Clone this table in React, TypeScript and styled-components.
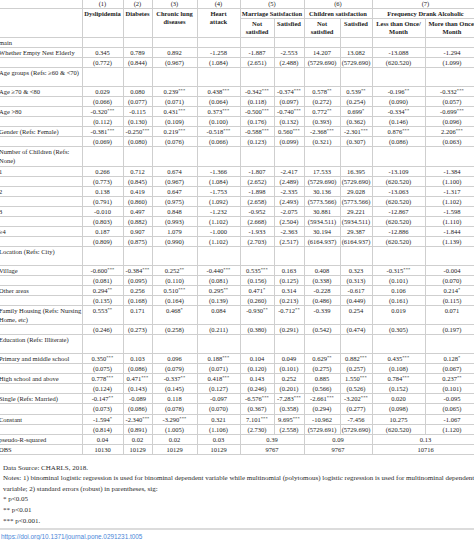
import React from "react"
import styled, {createGlobalStyle} from "styled-components"

const GlobalStyle = createGlobalStyle`
  html, body {
    margin: 0;
    padding: 0;
    background: #ffffff;
  }
  body {
    font-family: "Liberation Serif", "DejaVu Serif", serif;
    color: #222222;
  }
`

const Page = styled.div`
  width: 474px;
  height: 540px;
  overflow: hidden;
  background: #ffffff;
`

const Table = styled.table`
  border-collapse: collapse;
  table-layout: fixed;
  width: 480px;
  margin-left: -1px;
  margin-top: -3px;
  font-size: 6.5px;
  color: #222222;
`

const HeadCell = styled.th<{$top?: boolean; $h?: number}>`
  border: 1px solid #cfcfcf;
  border-top: none;
  padding: 0 1px;
  font-weight: ${(p) => (p.$top ? "normal" : "bold")};
  line-height: 8px;
  height: ${(p) => (p.$h ? `${p.$h}px` : "auto")};
  vertical-align: ${(p) => (p.$top ? "bottom" : "top")};
  padding-top: ${(p) => (p.$top ? "0" : "1px")};
  text-align: center;
  white-space: nowrap;
  overflow: hidden;
`

const BlankHead = styled.th`
  border-bottom: 1px solid #cfcfcf;
  border-right: 1px solid #cfcfcf;
  padding: 0;
`

const Row = styled.tr<{$tall?: boolean}>`
  height: ${(p) => (p.$tall ? "19px" : "9.05px")};
`

const LabelCell = styled.td`
  border: 1px solid #cfcfcf;
  border-left: none;
  padding: 0;
  line-height: 9.05px;
  vertical-align: top;
  text-align: left;
  white-space: nowrap;
  overflow: hidden;
`

const ValueCell = styled.td`
  border: 1px solid #cfcfcf;
  padding: 0;
  line-height: 9.05px;
  vertical-align: top;
  text-align: center;
  white-space: nowrap;
  overflow: hidden;
`

const Star = styled.span`
  font-size: 4.6px;
  line-height: 0;
  vertical-align: 1.6px;
  letter-spacing: 0.1px;
`

const Notes = styled.div`
  margin-top: 8px;
  padding-left: 3px;
  font-size: 7px;
  line-height: 10.6px;
  color: #2a2a2a;
  white-space: nowrap;
`

const Rule = styled.div`
  margin-top: 2px;
  height: 2px;
  background: #dcdcdc;
`

const DoiLink = styled.a`
  display: block;
  margin-top: 3px;
  padding-left: 1px;
  font-family: "Liberation Sans", Arial, sans-serif;
  font-size: 6.4px;
  color: #4a86d8;
  text-decoration: none;
`

type Line =
  | {kind: "coef"; label: string; v: string[]; tall?: boolean; br?: string}
  | {kind: "se"; v: string[]}
  | {kind: "cat"; label: string; br?: string}
  | {kind: "stat"; label: string; left: string[]; right: string[]}

const lines: Line[] = [
  {kind: "cat", label: "main"},
  {kind: "coef", label: "Whether Empty Nest Elderly", v: ["0.345", "0.789", "0.892", "-1.258", "-1.887", "-2.553", "14.207", "13.082", "-13.088", "-1.294"]},
  {kind: "se", v: ["(0.772)", "(0.844)", "(0.967)", "(1.084)", "(2.651)", "(2.488)", "(5729.690)", "(5729.690)", "(620.520)", "(1.099)"]},
  {kind: "cat", label: "Age groups (Refs: \u226560 & <70)"},
  {kind: "coef", label: "Age \u226570 & <80", v: ["0.029", "0.080", "0.239***", "0.438***", "-0.342***", "-0.374***", "0.578**", "0.539**", "-0.196**", "-0.332***"]},
  {kind: "se", v: ["(0.066)", "(0.077)", "(0.071)", "(0.064)", "(0.118)", "(0.097)", "(0.272)", "(0.254)", "(0.090)", "(0.057)"]},
  {kind: "coef", label: "Age >80", v: ["-0.320***", "-0.115", "0.431***", "0.373***", "-0.500***", "-0.740***", "0.772**", "0.699*", "-0.334**", "-0.699***"]},
  {kind: "se", v: ["(0.112)", "(0.130)", "(0.109)", "(0.100)", "(0.176)", "(0.132)", "(0.393)", "(0.362)", "(0.146)", "(0.096)"]},
  {kind: "coef", label: "Gender (Refs: Female)", v: ["-0.381***", "-0.250***", "0.219***", "-0.518***", "-0.588***", "0.560***", "-2.368***", "-2.301***", "0.876***", "2.206***"]},
  {kind: "se", v: ["(0.069)", "(0.080)", "(0.076)", "(0.066)", "(0.123)", "(0.099)", "(0.321)", "(0.307)", "(0.086)", "(0.063)"]},
  {kind: "cat", label: "Number of Children (Refs:", br: "None)"},
  {kind: "coef", label: "1", v: ["0.266", "0.712", "0.674", "-1.366", "-1.807", "-2.417", "17.533", "16.395", "-13.109", "-1.384"]},
  {kind: "se", v: ["(0.773)", "(0.845)", "(0.967)", "(1.084)", "(2.652)", "(2.489)", "(5729.690)", "(5729.690)", "(620.520)", "(1.100)"]},
  {kind: "coef", label: "2", v: ["0.138", "0.419", "0.647", "-1.753", "-1.898", "-2.335", "30.136", "29.028", "-13.063", "-1.317"]},
  {kind: "se", v: ["(0.791)", "(0.860)", "(0.975)", "(1.092)", "(2.658)", "(2.493)", "(5773.566)", "(5773.566)", "(620.520)", "(1.102)"]},
  {kind: "coef", label: "3", v: ["-0.010", "0.497", "0.848", "-1.232", "-0.952", "-2.075", "30.881", "29.221", "-12.867", "-1.598"]},
  {kind: "se", v: ["(0.803)", "(0.882)", "(0.993)", "(1.102)", "(2.668)", "(2.504)", "(5934.511)", "(5934.511)", "(620.520)", "(1.110)"]},
  {kind: "coef", label: "\u22654", v: ["0.187", "0.907", "1.079", "-1.000", "-1.933", "-2.363", "30.194", "29.387", "-12.886", "-1.844"]},
  {kind: "se", v: ["(0.809)", "(0.875)", "(0.990)", "(1.102)", "(2.703)", "(2.517)", "(6164.937)", "(6164.937)", "(620.520)", "(1.139)"]},
  {kind: "cat", label: "Location (Refs: City)"},
  {kind: "coef", label: "Village", v: ["-0.600***", "-0.384***", "0.252**", "-0.440***", "0.535***", "0.163", "0.408", "0.323", "-0.315***", "-0.004"]},
  {kind: "se", v: ["(0.081)", "(0.095)", "(0.110)", "(0.081)", "(0.156)", "(0.125)", "(0.338)", "(0.313)", "(0.101)", "(0.070)"]},
  {kind: "coef", label: "Other areas", v: ["0.294**", "0.256", "0.510***", "0.295**", "0.471*", "0.314", "-0.228", "-0.617", "0.106", "0.214*"]},
  {kind: "se", v: ["(0.135)", "(0.168)", "(0.164)", "(0.139)", "(0.260)", "(0.213)", "(0.486)", "(0.449)", "(0.161)", "(0.115)"]},
  {kind: "coef", label: "Family Housing (Refs: Nursing", br: "Home, etc)", tall: true, v: ["0.553**", "0.171", "0.468*", "0.084", "-0.930**", "-0.712**", "-0.339", "0.254", "0.019", "0.071"]},
  {kind: "se", v: ["(0.246)", "(0.273)", "(0.258)", "(0.211)", "(0.380)", "(0.291)", "(0.542)", "(0.474)", "(0.305)", "(0.197)"]},
  {kind: "cat", label: "Education (Refs: Illiterate)"},
  {kind: "coef", label: "Primary and middle school", v: ["0.350***", "0.103", "0.096", "0.188***", "0.104", "0.049", "0.629**", "0.882***", "0.435***", "0.128*"]},
  {kind: "se", v: ["(0.075)", "(0.086)", "(0.079)", "(0.071)", "(0.120)", "(0.101)", "(0.275)", "(0.257)", "(0.108)", "(0.067)"]},
  {kind: "coef", label: "High school and above", v: ["0.778***", "0.471***", "-0.337**", "0.418***", "0.143", "0.252", "0.885", "1.550***", "0.784***", "0.237**"]},
  {kind: "se", v: ["(0.124)", "(0.143)", "(0.145)", "(0.127)", "(0.246)", "(0.201)", "(0.566)", "(0.526)", "(0.152)", "(0.101)"]},
  {kind: "coef", label: "Single (Refs: Married)", v: ["-0.147**", "-0.089", "0.118", "-0.097", "-6.576***", "-7.283***", "-2.661***", "-3.202***", "0.020", "-0.095"]},
  {kind: "se", v: ["(0.073)", "(0.086)", "(0.078)", "(0.070)", "(0.367)", "(0.358)", "(0.294)", "(0.277)", "(0.098)", "(0.065)"]},
  {kind: "coef", label: "Constant", v: ["-1.594*", "-2.340***", "-3.290***", "0.321", "7.101***", "9.695***", "-10.962", "-7.456", "10.275", "-1.067"]},
  {kind: "se", v: ["(0.814)", "(0.891)", "(1.005)", "(1.106)", "(2.730)", "(2.558)", "(5729.691)", "(5729.690)", "(620.520)", "(1.120)"]},
  {kind: "stat", label: "pseudo-R-squared", left: ["0.04", "0.02", "0.02", "0.03"], right: ["0.39", "0.09", "0.13"]},
  {kind: "stat", label: "OBS", left: ["10130", "10129", "10129", "10129"], right: ["9767", "9767", "10716"]},
]

const widths = [83, 41, 29, 45, 43, 34, 30, 36, 32, 53, 54]

const Value = ({text}: {text: string}) => {
  const m = text.match(/^(.*?)(\*+)$/)
  if (!m) return <>{text}</>
  return (
    <>
      {m[1]}
      <Star>{m[2]}</Star>
    </>
  )
}

export default function App() {
  return (
    <Page>
      <GlobalStyle />
      <Table>
        <colgroup>
          {widths.map((w, i) => (
            <col key={i} style={{width: w}} />
          ))}
        </colgroup>
        <thead>
          <tr>
            <BlankHead />
            {["(1)", "(2)", "(3)", "(4)"].map((n) => (
              <HeadCell key={n} $top $h={11}>{n}</HeadCell>
            ))}
            <HeadCell $top colSpan={2}>(5)</HeadCell>
            <HeadCell $top colSpan={2}>(6)</HeadCell>
            <HeadCell $top colSpan={2}>(7)</HeadCell>
          </tr>
          <tr>
            <BlankHead rowSpan={2} />
            <HeadCell rowSpan={2}>Dyslipidemia</HeadCell>
            <HeadCell rowSpan={2}>Diabetes</HeadCell>
            <HeadCell rowSpan={2}>Chronic lung<br />diseases</HeadCell>
            <HeadCell rowSpan={2}>Heart<br />attack</HeadCell>
            <HeadCell colSpan={2} $h={7}>Marriage Satisfaction</HeadCell>
            <HeadCell colSpan={2} $h={7}>Children satisfaction</HeadCell>
            <HeadCell colSpan={2} $h={7}>Frequency Drank Alcoholic</HeadCell>
          </tr>
          <tr>
            <HeadCell $h={17}>Not<br />satisfied</HeadCell>
            <HeadCell $h={17}>Satisfied</HeadCell>
            <HeadCell $h={17}>Not<br />satisfied</HeadCell>
            <HeadCell $h={17}>Satisfied</HeadCell>
            <HeadCell $h={17}>Less than Once/<br />Month</HeadCell>
            <HeadCell $h={17}>More than Once/<br />Month</HeadCell>
          </tr>
        </thead>
        <tbody>
          {lines.map((line, i) => {
            if (line.kind === "cat") {
              const tall = line.label !== "main"
              return (
                <Row key={i} $tall={tall}>
                  <LabelCell>
                    {line.label}
                    {line.br && (<><br />{line.br}</>)}
                  </LabelCell>
                  {widths.slice(1).map((_, j) => (
                    <ValueCell key={j} />
                  ))}
                </Row>
              )
            }
            if (line.kind === "se") {
              return (
                <Row key={i}>
                  <LabelCell />
                  {line.v.map((t, j) => (
                    <ValueCell key={j}>{t}</ValueCell>
                  ))}
                </Row>
              )
            }
            if (line.kind === "stat") {
              return (
                <Row key={i}>
                  <LabelCell>{line.label}</LabelCell>
                  {line.left.map((t, j) => (
                    <ValueCell key={j}>{t}</ValueCell>
                  ))}
                  {line.right.map((t, j) => (
                    <ValueCell key={"r" + j} colSpan={2}>{t}</ValueCell>
                  ))}
                </Row>
              )
            }
            return (
              <Row key={i} $tall={line.tall}>
                <LabelCell>
                  {line.label}
                  {line.br && (<><br />{line.br}</>)}
                </LabelCell>
                {line.v.map((t, j) => (
                  <ValueCell key={j}><Value text={t} /></ValueCell>
                ))}
              </Row>
            )
          })}
        </tbody>
      </Table>
      <Notes>
        Data Source: CHARLS, 2018.
        <br />
        Notes: 1) binominal logistic regression is used for binominal dependent variable while multinomial (polytomous) logistic regression is used for multinominal dependent
        <br />
        variable; 2) standard errors (robust) in parentheses, sig:
        <br />
        * p&lt;0.05
        <br />
        ** p&lt;0.01
        <br />
        *** p&lt;0.001.
      </Notes>
      <Rule />
      <DoiLink href="#">https://doi.org/10.1371/journal.pone.0291231.t005</DoiLink>
    </Page>
  )
}
